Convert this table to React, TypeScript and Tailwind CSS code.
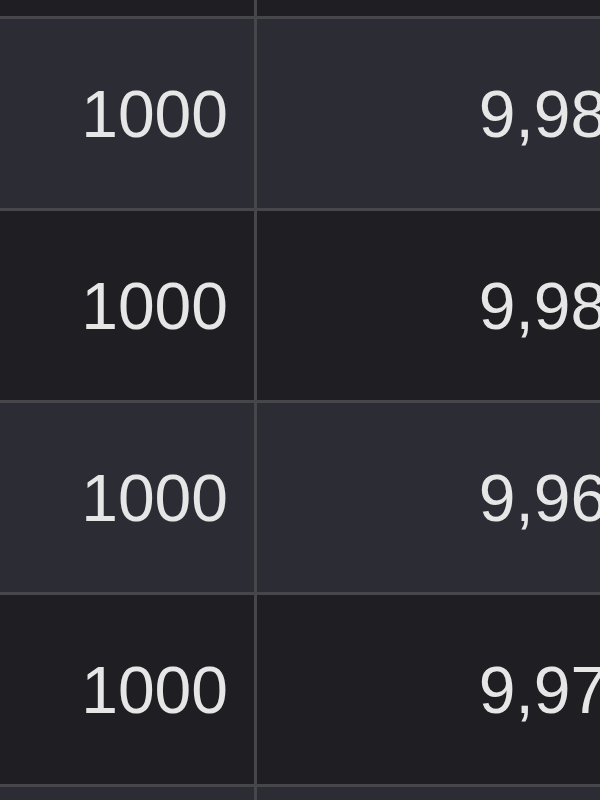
const rows = [
  { qty: "", price: "", light: false, partial: "top" },
  { qty: "1000", price: "9,980", light: true },
  { qty: "1000", price: "9,980", light: false },
  { qty: "1000", price: "9,960", light: true },
  { qty: "1000", price: "9,970", light: false },
  { qty: "", price: "", light: true, partial: "bottom" },
];

function Row({
  qty,
  price,
  light,
  partial,
}: {
  qty: string;
  price: string;
  light: boolean;
  partial?: string;
}) {
  const bg = light ? "bg-[#2c2c35]" : "bg-[#1f1f23]";
  const height =
    partial === "top" ? "h-[16px]" : partial === "bottom" ? "h-[40px]" : "h-[192px]";
  const border = partial === "top" ? "" : "border-t-[3px] border-[#47474b]";
  return (
    <div className={`flex shrink-0 ${height} ${border} ${bg}`}>
      <div className="flex w-[257px] shrink-0 items-center justify-end border-r-[3px] border-[#47474b] pr-[26px]">
        {qty}
      </div>
      <div className="flex w-[413px] shrink-0 items-center justify-end pr-[26px]">
        {price}
      </div>
    </div>
  );
}

export default function App() {
  return (
    <div className="flex h-[800px] w-[600px] flex-col overflow-hidden bg-[#1f1f23] font-['Liberation_Sans',Arial,sans-serif] text-[66px] leading-none text-[#e6e6e6] antialiased">
      {rows.map((r, i) => (
        <Row key={i} {...r} />
      ))}
    </div>
  );
}
